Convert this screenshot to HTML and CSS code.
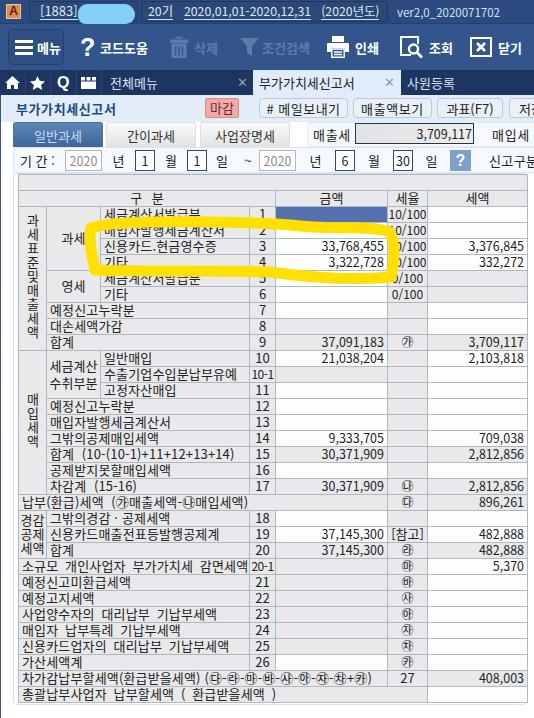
FILE: index.html
```html
<!DOCTYPE html>
<html lang="ko">
<head>
<meta charset="utf-8">
<title>부가가치세신고서</title>
<link rel="stylesheet" href="styles.css">
</head>
<body>
<div class="app">
  <header class="titlebar">
    <span class="logo">A</span>
    <div class="tbox tbox-co"><span class="ul">[1883]</span></div>
    <div class="tbox tbox-term"><span class="ul t1">20기</span><span class="ul t2">2020,01,01-2020,12,31</span><span class="ul t3">(2020년도)</span></div>
    <span class="ver">ver2,0_2020071702</span>
  </header>

  <nav class="toolbar">
    <button class="tool menu-btn">
      <svg width="18" height="15" viewBox="0 0 18 15"><path d="M0 1.500h18M0 7.500h18M0 13.500h18" stroke="#fff" stroke-width="3"/></svg>
      <span>메뉴</span>
    </button>
    <button class="tool">
      <span class="qmark">?</span>
      <span>코드도움</span>
    </button>
    <button class="tool off">
      <svg width="18" height="22" viewBox="0 0 18 22"><path d="M6 2.500V1h6v1.500M0 4h18v2.500H0zM2 8h14v14H2z" fill="#5f7ba8" stroke="#5f7ba8" stroke-width="1"/><path d="M5.500 10.500v9M9 10.500v9M12.500 10.500v9" stroke="#35568e" stroke-width="1.500"/></svg>
      <span>삭제</span>
    </button>
    <button class="tool off tool-funnel">
      <svg width="19" height="18" viewBox="0 0 19 18"><path d="M0 0h19l-7 8v10l-5-3V8z" fill="#5f7ba8"/></svg>
      <span>조건검색</span>
    </button>
    <button class="tool">
      <svg width="22" height="22" viewBox="0 0 22 22"><path d="M5 0h12v6H5z" fill="#fff"/><path d="M1 7h20a1 1 0 0 1 1 1v8h-4v-4H4v4H0V8a1 1 0 0 1 1-1z" fill="#fff"/><path d="M4.800 13h12.400v8.200H4.800zM7 16h8M7 18.500h8" fill="#35568e" stroke="#fff" stroke-width="1.400"/></svg>
      <span>인쇄</span>
    </button>
    <button class="tool">
      <svg width="23" height="23" viewBox="0 0 23 23"><path d="M11 19H1V1h17v7" fill="none" stroke="#fff" stroke-width="2"/><circle cx="13.500" cy="13" r="4.500" fill="none" stroke="#fff" stroke-width="2.400"/><path d="M17 16.500l5 5" stroke="#fff" stroke-width="2.600"/></svg>
      <span>조회</span>
    </button>
    <button class="tool">
      <svg width="22" height="20" viewBox="0 0 22 20"><rect x="1" y="1" width="20" height="18" fill="none" stroke="#fff" stroke-width="2"/><path d="M7 6l8 8M15 6l-8 8" stroke="#fff" stroke-width="2.600"/></svg>
      <span>닫기</span>
    </button>
  </nav>

  <div class="tabbar">
    <span class="ico"><svg width="15" height="13" viewBox="0 0 15 13"><path d="M7.500 0L15 7h-2v6H9V9H6v4H2V7H0z" fill="#fff"/></svg></span>
    <span class="ico"><svg width="15" height="14" viewBox="0 0 15 14"><path d="M7.500 0l2.200 4.800 5.300.6-3.900 3.500 1.100 5.100-4.700-2.700L2.800 14l1.100-5.100L0 5.400l5.300-.6z" fill="#fff"/></svg></span>
    <span class="ico ico-q">Q</span>
    <span class="ico"><svg width="15" height="12" viewBox="0 0 15 12"><path d="M0 4.500h15V12H0zM0 0h4v3.500H0zM5.500 0h4v3.500h-4zM11 0h4v3.500h-4z" fill="#fff"/></svg></span>
    <div class="tab tab-all"><span>전체메뉴</span><b class="x">✕</b></div>
    <div class="tab tab-on"><span>부가가치세신고서</span><b class="x">✕</b></div>
    <div class="tab tab-emp"><span>사원등록</span></div>
  </div>

  <main class="content">
    <div class="subhead">
      <h1>부가가치세신고서</h1>
      <span class="closed">마감</span>
      <button class="btn btn-mail"># 메일보내기</button>
      <button class="btn btn-sales">매출액보기</button>
      <button class="btn btn-tax">과표(F7)</button>
      <button class="btn btn-save">저장</button>
    </div>

    <div class="kindrow">
      <button class="kind on">일반과세</button>
      <button class="kind">간이과세</button>
      <button class="kind">사업장명세</button>
      <div class="sumbox">
        <span class="sumlabel">매출세</span>
        <span class="sumval">3,709,117</span>
        <span class="sumlabel2">매입세</span>
      </div>
    </div>

    <div class="period">
      <span class="plabel">기 간 :</span>
      <span class="inp dim">2020</span><span>년</span>
      <span class="inp">1</span><span>월</span>
      <span class="inp">1</span><span>일</span>
      <span>~</span>
      <span class="inp dim">2020</span><span>년</span>
      <span class="inp">6</span><span>월</span>
      <span class="inp">30</span><span>일</span>
      <span class="help">?</span>
      <span class="pkind">신고구분</span>
    </div>

    <section class="card">
      <table class="vat">
        <colgroup><col class="c1"><col class="c2"><col class="c3"><col class="c4"><col class="c5"><col class="c6"><col class="c7"></colgroup>
        <tbody>
          <tr><td colspan="7"></td></tr>
          <tr><td colspan="4" class="c hd">구 분</td><td class="c">금액</td><td class="c">세율</td><td class="c">세액</td></tr>

          <tr><td rowspan="9" class="c"><span class="vert">과세표준및매출세액</span></td><td rowspan="4" class="c">과세</td><td class="l">세금계산서발급분</td><td class="c">1</td><td class="b"></td><td class="c r">10/100</td><td class="w"></td></tr>
          <tr><td class="l">매입자발행세금계산서</td><td class="c">2</td><td class="w"></td><td class="c r">10/100</td><td class="w"></td></tr>
          <tr><td class="l">신용카드.현금영수증</td><td class="c">3</td><td class="w n">33,768,455</td><td class="c r">10/100</td><td class="w n">3,376,845</td></tr>
          <tr><td class="l">기타</td><td class="c">4</td><td class="w n">3,322,728</td><td class="c r">10/100</td><td class="w n">332,272</td></tr>
          <tr><td rowspan="2" class="c">영세</td><td class="l">세금계산서발급분</td><td class="c">5</td><td class="w"></td><td class="c r">0/100</td><td></td></tr>
          <tr><td class="l">기타</td><td class="c">6</td><td class="w"></td><td class="c r">0/100</td><td></td></tr>
          <tr><td colspan="2" class="l">예정신고누락분</td><td class="c">7</td><td class="w"></td><td></td><td class="w"></td></tr>
          <tr><td colspan="2" class="l">대손세액가감</td><td class="c">8</td><td></td><td></td><td class="w"></td></tr>
          <tr><td colspan="2" class="l">합계</td><td class="c">9</td><td class="n">37,091,183</td><td class="c r">㉮</td><td class="n">3,709,117</td></tr>

          <tr><td rowspan="9" class="c"><span class="vert">매입세액</span></td><td rowspan="3" class="c pair">세금계산<br>수취부분</td><td class="l">일반매입</td><td class="c">10</td><td class="w n">21,038,204</td><td></td><td class="w n">2,103,818</td></tr>
          <tr><td class="l">수출기업수입분납부유예</td><td class="c tight">10-1</td><td></td><td></td><td class="w"></td></tr>
          <tr><td class="l">고정자산매입</td><td class="c">11</td><td class="w"></td><td></td><td class="w"></td></tr>
          <tr><td colspan="2" class="l">예정신고누락분</td><td class="c">12</td><td class="w"></td><td></td><td class="w"></td></tr>
          <tr><td colspan="2" class="l">매입자발행세금계산서</td><td class="c">13</td><td class="w"></td><td></td><td class="w"></td></tr>
          <tr><td colspan="2" class="l">그밖의공제매입세액</td><td class="c">14</td><td class="w n">9,333,705</td><td></td><td class="w n">709,038</td></tr>
          <tr><td colspan="2" class="l">합계 &nbsp;(10-(10-1)+11+12+13+14)</td><td class="c">15</td><td class="n">30,371,909</td><td></td><td class="n">2,812,856</td></tr>
          <tr><td colspan="2" class="l">공제받지못할매입세액</td><td class="c">16</td><td class="w"></td><td></td><td class="w"></td></tr>
          <tr><td colspan="2" class="l">차감계 &nbsp;(15-16)</td><td class="c">17</td><td class="n">30,371,909</td><td class="c r">㉯</td><td class="n">2,812,856</td></tr>

          <tr><td colspan="5" class="l">납부(환급)세액 &nbsp;(㉮매출세액-㉯매입세액)</td><td class="c r">㉰</td><td class="n">896,261</td></tr>
          <tr><td rowspan="3" class="c triple">경감<br>공제<br>세액</td><td colspan="2" class="l">그밖의경감 · 공제세액</td><td class="c">18</td><td class="w"></td><td></td><td class="w"></td></tr>
          <tr><td colspan="2" class="l">신용카드매출전표등발행공제계</td><td class="c">19</td><td class="w n">37,145,300</td><td class="c">[참고]</td><td class="w n">482,888</td></tr>
          <tr><td colspan="2" class="l">합계</td><td class="c">20</td><td class="n">37,145,300</td><td class="c r">㉱</td><td class="n">482,888</td></tr>
          <tr><td colspan="3" class="l wide">소규모 개인사업자 부가가치세 감면세액</td><td class="c tight">20-1</td><td></td><td class="c r">㉲</td><td class="w n">5,370</td></tr>
          <tr><td colspan="3" class="l">예정신고미환급세액</td><td class="c">21</td><td></td><td class="c r">㉳</td><td class="w"></td></tr>
          <tr><td colspan="3" class="l">예정고지세액</td><td class="c">22</td><td></td><td class="c r">㉴</td><td class="w"></td></tr>
          <tr><td colspan="3" class="l wide">사업양수자의 대리납부 기납부세액</td><td class="c">23</td><td></td><td class="c r">㉵</td><td class="w"></td></tr>
          <tr><td colspan="3" class="l wide">매입자 납부특례 기납부세액</td><td class="c">24</td><td></td><td class="c r">㉶</td><td class="w"></td></tr>
          <tr><td colspan="3" class="l wide">신용카드업자의 대리납부 기납부세액</td><td class="c">25</td><td></td><td class="c r">㉷</td><td class="w"></td></tr>
          <tr><td colspan="3" class="l">가산세액계</td><td class="c">26</td><td class="w"></td><td class="c r">㉸</td><td class="w"></td></tr>
          <tr><td colspan="5" class="l">차가감납부할세액(환급받을세액) (㉰-㉱-㉲-㉳-㉴-㉵-㉶-㉷+㉸)</td><td class="c">27</td><td class="n">408,003</td></tr>
          <tr><td colspan="6" class="l wide">총괄납부사업자 납부할세액 ( 환급받을세액 )</td><td class="w"></td></tr>
        </tbody>
      </table>
    </section>
  </main>

  <div class="blob"></div>
  <svg class="marker" width="534" height="718" viewBox="0 0 534 718"><path d="M91 228C120 218 260 222 300 226C340 230 372 225 390 232C396 245 394 265 391 277C360 280 320 279 270 272C210 270 140 272 95 270C92 255 88 240 91 228Z" fill="none" stroke="#ffe000" stroke-width="11" stroke-linejoin="round"/></svg>
</div>
</body>
</html>
```

FILE: styles.css
```css
* { box-sizing: border-box; }
html, body { margin: 0; padding: 0; background: #fff; }
body { font-family: "Noto Sans CJK KR", "Noto Sans", sans-serif; font-size: 13px; color: #222; }
button { font: inherit; padding: 0; margin: 0; }
.app { position: relative; width: 534px; height: 718px; overflow: hidden; }

.titlebar { height: 24px; background: #2c4a7f; display: flex; align-items: center; color: #dfe8f5; line-height: 16px; border-bottom: 1px solid #25406f; white-space: nowrap; }
.logo { width: 15px; height: 15px; margin-left: 6px; background: #d98f52; border: 1px solid #f3c58e; color: #5a2310; font: 700 12px/13px "Liberation Sans", sans-serif; text-align: center; flex: none; }
.tbox { height: 21px; border: 1px solid #1f3861; border-radius: 3px; display: flex; align-items: center; background: #2b4876; flex: none; }
.tbox-co { width: 109px; margin-left: 8px; padding-left: 10px; }
.tbox-term { width: 247px; margin-left: 3px; padding-left: 6px; font-size: 12.300px; }
.ul { border-bottom: 1px solid #cfe0f5; height: 17px; }
.t2 { margin-left: 11px; }
.t3 { margin-left: 10px; }
.ver { margin-left: 9px; font-size: 11.500px; color: #d7e2f0; }

.toolbar { height: 46px; background: #34558c; display: grid; grid-template-columns: 72px 90px 70px 87px 73px 70px 60px; padding-left: 8px; align-items: center; }
.tool { display: flex; align-items: center; gap: 6px; background: none; border: 0; color: #fff; font-weight: 700; font-size: 13px; height: 36px; }
.tool span { white-space: nowrap; }
.menu-btn { width: 56px; border: 1px solid #223f70; border-radius: 5px; background: #2f4e84; padding-left: 6px; gap: 4px; }
.qmark { font: 700 25px/25px "Liberation Sans", sans-serif; width: 14px; }
.off { color: #5f7ba8; }
.tool-funnel { gap: 3px; }

.tabbar { height: 25px; background: #1f3561; display: flex; align-items: stretch; color: #d8e3f2; }
.ico { width: 25.500px; display: flex; align-items: center; justify-content: center; border-right: 1px solid #2c4573; }
.ico-q { color: #fff; font: 700 16px/16px "Liberation Sans", sans-serif; }
.tab { display: flex; align-items: center; justify-content: space-between; font-size: 13px; }
.tab-all { width: 151px; padding: 0 5px 0 8px; }
.tab-on { width: 148px; padding: 0 6px 0 6px; background: #e1ecfa; color: #222; }
.tab-emp { flex: 1; padding-left: 6px; }
.x { font: 700 13px/13px "DejaVu Sans", sans-serif; color: #8e9db5; }

.content { height: 623px; border-left: 1px solid #39587c; }
.subhead { height: 27px; background: #e3edf9; display: flex; align-items: center; white-space: nowrap; }
h1 { margin: 0 0 0 15px; width: 189px; flex: none; font-size: 13px; font-weight: 700; color: #1d4a80; letter-spacing: .6px; }
.closed { width: 34px; height: 20px; flex: none; background: #f4a9a6; border: 1px solid #d38a88; border-radius: 2px; text-align: center; line-height: 17px; color: #5d3030; margin-bottom: 1px; }
.btn { height: 20px; line-height: 17px; background: #eaf0f8; border: 1px solid #bccadb; border-radius: 4px; color: #222; margin-bottom: 1px; flex: none; }
.btn-mail { width: 89px; margin-left: 20px; letter-spacing: .5px; }
.btn-sales { width: 79px; margin-left: 5px; letter-spacing: .6px; }
.btn-tax { width: 66px; margin-left: 5px; }
.btn-save { width: 70px; margin-left: 6px; padding-left: 9px; text-align: left; }

.kindrow { height: 25px; display: flex; padding-left: 12px; }
.kind { height: 25px; width: 90px; border: 1px solid #dadfe5; border-bottom: 0; background: linear-gradient(#fafafa, #e2e2e2); color: #333; flex: none; margin-right: 3px; border-radius: 3px 3px 0 0; }
.kind.on { background: linear-gradient(#5e86b6, #3c659b); color: #c9dcf2; border-color: #4a72a5; }
.kind:nth-child(3) { margin-left: 1px; margin-right: 17px; }
.sumbox { flex: 1; display: flex; align-items: center; background: #f5f8fc; border-radius: 4px 0 0 4px; border: 1px solid #e4ebf4; border-right: 0; padding-left: 5px; white-space: nowrap; }
.sumlabel { width: 42px; letter-spacing: .7px; }
.sumval { width: 119px; height: 21px; border: 1px solid #1c3a52; background: linear-gradient(90deg, #e2e2e2, #ededed); text-align: right; padding-right: 1px; line-height: 19px; font-size: 12.500px; margin-bottom: 2px; }
.sumlabel2 { margin-left: 18px; letter-spacing: .7px; }

.period { height: 26px; margin-left: 12px; background: #f5f8fc; border: 1px solid #dbe5f0; border-right: 0; border-radius: 3px 0 0 3px; display: grid; grid-template-columns: 45px 37px 33px 20px 32px 20px 30px 22px 37px 39px 20px 38px 20px 37px 21px auto; padding-left: 6px; align-items: center; justify-items: center; white-space: nowrap; }
.plabel { justify-self: start; }
.inp { width: 100%; height: 21px; background: #fff; border: 1px solid #2f4a63; text-align: center; line-height: 19px; font-size: 12.500px; }
.inp.dim { border-color: #b5b5b5; color: #8a8a8a; }
.help { width: 21px; height: 21px; background: #7f9fcb; color: #fff; font: 700 16px/21px "Liberation Sans", sans-serif; text-align: center; }
.pkind { margin-left: 18px; letter-spacing: .4px; }

.card { margin: 0 0 0 12px; width: 514px; height: 532px; padding-left: 4px; border: 1px solid #d9e2ec; border-radius: 4px; }
.vat { border-collapse: collapse; table-layout: fixed; width: 509px; }
.c1 { width: 28px; } .c2 { width: 54px; } .c3 { width: 149px; } .c4 { width: 26px; } .c5 { width: 112px; } .c6 { width: 40px; } .c7 { width: 100px; }
.vat td { height: 16px; padding: 0 0 2px; border: 1px solid #a9b9c9; background: #e9e9e9; line-height: 12px; font-size: 13px; white-space: nowrap; }
.vat td.w { background: #fff; }
.vat td.b { background: #5470ae; }
.vat td.c { text-align: center; }
.vat td.l { padding-left: 3px; letter-spacing: .15px; }
.vat td.l.wide { word-spacing: 3px; }
.vat td.n { text-align: right; padding-right: 3px; font-size: 12.500px; }
.vat td.r { font-size: 12px; }
.vat td.hd { word-spacing: 6px; }
.vat td.tight { font-size: 12px; letter-spacing: -.5px; }
.vat td.pair { line-height: 17px; }
.vat td.triple { line-height: 14px; }
.vert { display: inline-block; writing-mode: vertical-rl; text-orientation: upright; letter-spacing: 1px; line-height: 14px; }

.blob { position: absolute; left: 78px; top: 4px; width: 57px; height: 20px; background: #82d0f6; border-radius: 12px 14px 12px 10px; }
.marker { position: absolute; left: 0; top: 0; pointer-events: none; }
```
